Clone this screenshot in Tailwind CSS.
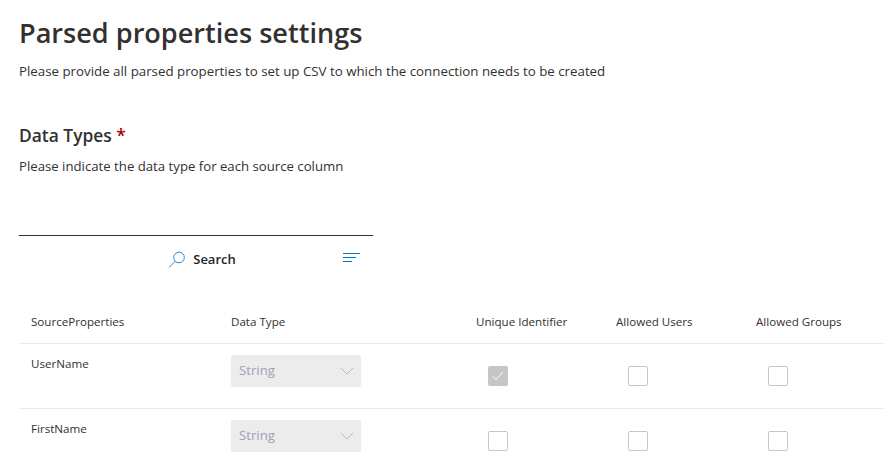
<!DOCTYPE html>
<html lang="en">
<head>
    <meta charset="UTF-8" />
    <title>Parsed properties settings</title>
    <script src="https://cdn.jsdelivr.net/npm/@tailwindcss/browser@4"></script>
</head>
<body class="bg-white h-[472px] overflow-hidden font-['Open_Sans','Noto_Sans',sans-serif] text-[#323130]">
<div class="pl-[19px] w-[884px]">

    <!-- Heading -->
    <h1 class="pt-[14px] h-[50px] text-[27.1px] leading-[38px] font-semibold">Parsed properties settings</h1>
    <p class="mt-[11px] h-[20px] text-[13.3px] leading-[20px]">Please provide all parsed properties to set up CSV to which the connection needs to be created</p>

    <!-- Data types -->
    <h2 class="mt-[41px] h-[26px] text-[17.4px] leading-[26px] font-semibold">Data Types <span class="text-[#a80000]">*</span></h2>
    <p class="mt-[8px] h-[20px] text-[13.2px] leading-[20px]">Please indicate the data type for each source column</p>

    <!-- Search box -->
    <div class="mt-[59px] w-[354px] h-[46px] border-t border-[#323130] flex items-center relative">
        <div class="flex-1 flex items-center justify-center gap-[7px] pl-[12px] pt-[2px]">
            <svg width="18" height="18" viewBox="0 0 18 18" fill="none" stroke="#2b88d8" stroke-width="1">
                <circle cx="11" cy="6.5" r="5.3" />
                <path d="M7.2 10.3 L1 16.5" />
            </svg>
            <span class="text-[13px] font-semibold text-[#252423]">Search</span>
        </div>
        <svg class="absolute right-[13px] top-[17px]" width="17" height="10" viewBox="0 0 17 10" fill="none" stroke="#0078d4" stroke-width="1">
            <path d="M0 .5H17M0 4.5H13M0 8.5H9" />
        </svg>
    </div>

    <!-- Table -->
    <div class="mt-[28px] text-[11.6px]">
        <div class="grid grid-cols-[200px_245px_140px_140px_1fr] h-[35px] pl-[12px] border-b border-[#edebe9] leading-[18px] pt-[4px]">
            <div>SourceProperties</div>
            <div>Data Type</div>
            <div>Unique Identifier</div>
            <div>Allowed Users</div>
            <div>Allowed Groups</div>
        </div>

        <div class="grid grid-cols-[200px_245px_140px_140px_1fr] h-[65px] pl-[12px] border-b border-[#edebe9]">
            <div class="pt-[11px] leading-[18px]">UserName</div>
            <div class="pt-[11px]">
                <div class="w-[130px] h-[32px] bg-[#ececec] rounded-[2px] flex items-center justify-between pl-[8px] pr-[7px] text-[13.2px] text-[#a19fb5]">
                    <span>String</span>
                    <svg width="14" height="8" viewBox="0 0 14 8" fill="none" stroke="#bdbbb8" stroke-width="1"><path d="M1 1l6 6 6-6" /></svg>
                </div>
            </div>
            <div class="pt-[22px] pl-[12px]">
                <div class="w-[20px] h-[20px] bg-[#c8c6c4] rounded-[2px] flex items-center justify-center">
                    <svg width="12" height="10" viewBox="0 0 12 10" fill="none" stroke="#fff" stroke-width="1"><path d="M1 5.5l3 3 7-7.5" /></svg>
                </div>
            </div>
            <div class="pt-[22px] pl-[12px]"><div class="w-[20px] h-[20px] border border-[#c8c6c4] rounded-[2px]"></div></div>
            <div class="pt-[22px] pl-[12px]"><div class="w-[20px] h-[20px] border border-[#c8c6c4] rounded-[2px]"></div></div>
        </div>

        <div class="grid grid-cols-[200px_245px_140px_140px_1fr] h-[65px] pl-[12px]">
            <div class="pt-[11px] leading-[18px]">FirstName</div>
            <div class="pt-[11px]">
                <div class="w-[130px] h-[32px] bg-[#ececec] rounded-[2px] flex items-center justify-between pl-[8px] pr-[7px] text-[13.2px] text-[#a19fb5]">
                    <span>String</span>
                    <svg width="14" height="8" viewBox="0 0 14 8" fill="none" stroke="#bdbbb8" stroke-width="1"><path d="M1 1l6 6 6-6" /></svg>
                </div>
            </div>
            <div class="pt-[22px] pl-[12px]"><div class="w-[20px] h-[20px] border border-[#c8c6c4] rounded-[2px]"></div></div>
            <div class="pt-[22px] pl-[12px]"><div class="w-[20px] h-[20px] border border-[#c8c6c4] rounded-[2px]"></div></div>
            <div class="pt-[22px] pl-[12px]"><div class="w-[20px] h-[20px] border border-[#c8c6c4] rounded-[2px]"></div></div>
        </div>
    </div>
</div>
</body>
</html>
